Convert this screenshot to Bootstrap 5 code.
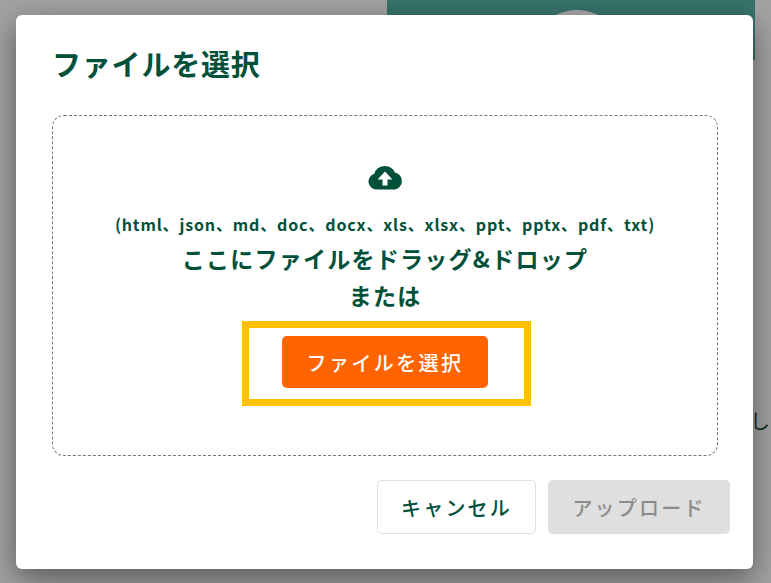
<!DOCTYPE html>
<html lang="ja">

<head>
    <meta charset="UTF-8">
    <meta name="viewport" content="width=device-width, initial-scale=1.0">
    <title>ファイルを選択</title>
    <link href="https://cdn.jsdelivr.net/npm/bootstrap@5.3.5/dist/css/bootstrap.min.css" rel="stylesheet">
    <script src="https://cdn.jsdelivr.net/npm/bootstrap@5.3.5/dist/js/bootstrap.bundle.min.js"></script>
    <style>
        html, body { height: 583px; overflow: hidden; }
        body {
            background: #a2a2a2;
            font-family: "Noto Sans CJK JP", "Noto Sans", sans-serif;
            color: #00503a;
            position: relative;
        }
        .back-panel { position: absolute; left: 387px; top: 0; width: 368px; height: 60px; background: #37736c; }
        .back-circle { position: absolute; left: 143px; top: 10px; width: 94px; height: 94px; border-radius: 50%; background: #a8a8a8; }
        .back-char { position: absolute; left: 750px; top: 406px; font-size: 20px; line-height: 30px; color: #17302b; }
        .dialog-box {
            position: absolute; left: 16px; top: 15px; width: 737px; height: 554px;
            background: #fff; border-radius: 6px; padding: 26px 35px 35px 36px;
            box-shadow: 0 10px 30px rgba(0, 0, 0, .45);
        }
        .dialog-title { font-size: 29px; font-weight: 700; line-height: 44px; margin: 0 0 30px; letter-spacing: .8px; }
        .drop-zone { height: 341px; border: 1px dashed #777; border-radius: 12px; padding-top: 47px; }
        .cloud-icon { display: block; width: 36px; height: 30px; }
        .file-types { font-size: 16px; font-weight: 700; line-height: 24px; margin-top: 19px; letter-spacing: .85px; }
        .drop-text { font-size: 23px; font-weight: 700; line-height: 37px; letter-spacing: 1.25px; }
        .pick-wrap { position: relative; margin-top: 3px; padding-top: 19px; }
        .pick-frame { position: absolute; left: -40px; top: 4px; width: 289px; height: 85px; border: 7px solid #ffc000; }
        .btn-pick {
            display: block; width: 206px; height: 52px; background: #ff6400; color: #fff; border: 0; border-radius: 5px;
            font-size: 20px; font-weight: 500; letter-spacing: 2.4px; padding-top: 8px;
        }
        .btn-pick:hover { background: #ff6400; color: #fff; }
        .dialog-foot { margin-top: 24px; margin-right: -12px; gap: 12px; }
        .btn-foot { height: 54px; border-radius: 5px; font-size: 20px; font-weight: 500; letter-spacing: 2.2px; padding: 2px 0 0; }
        .btn-cancel { width: 159px; background: #fff; border: 1px solid #e0e0e0; color: #00503a; }
        .btn-upload, .btn-upload:disabled { width: 182px; background: #dfdfdf; border: 0; color: #8c8c8c; opacity: 1; }
    </style>
</head>

<body>
    <div class="back-panel"><div class="back-circle"></div></div>
    <div class="back-char">し</div>

    <div class="dialog-box">
        <h1 class="dialog-title">ファイルを選択</h1>

        <div class="drop-zone d-flex flex-column align-items-center text-center">
            <svg class="cloud-icon" viewBox="0 0 36 30" aria-hidden="true">
                <path fill="#00503a" d="M9.5 26.5a8 8 0 0 1-2.2-15.7 11 11 0 0 1 20.6-1.2 8.6 8.6 0 0 1 0 16.9H9.5zM18 8.6l-7.4 7.8h4.9v6h5v-6h4.900z"/>
            </svg>
            <div class="file-types">(html、json、md、doc、docx、xls、xlsx、ppt、pptx、pdf、txt)</div>
            <div class="drop-text mt-1">ここにファイルをドラッグ&amp;ドロップ</div>
            <div class="drop-text">または</div>
            <div class="pick-wrap">
                <button type="button" class="btn btn-pick">ファイルを選択</button>
                <div class="pick-frame"></div>
            </div>
        </div>

        <div class="dialog-foot d-flex justify-content-end">
            <button type="button" class="btn btn-foot btn-cancel">キャンセル</button>
            <button type="button" class="btn btn-foot btn-upload" disabled>アップロード</button>
        </div>
    </div>
</body>

</html>
